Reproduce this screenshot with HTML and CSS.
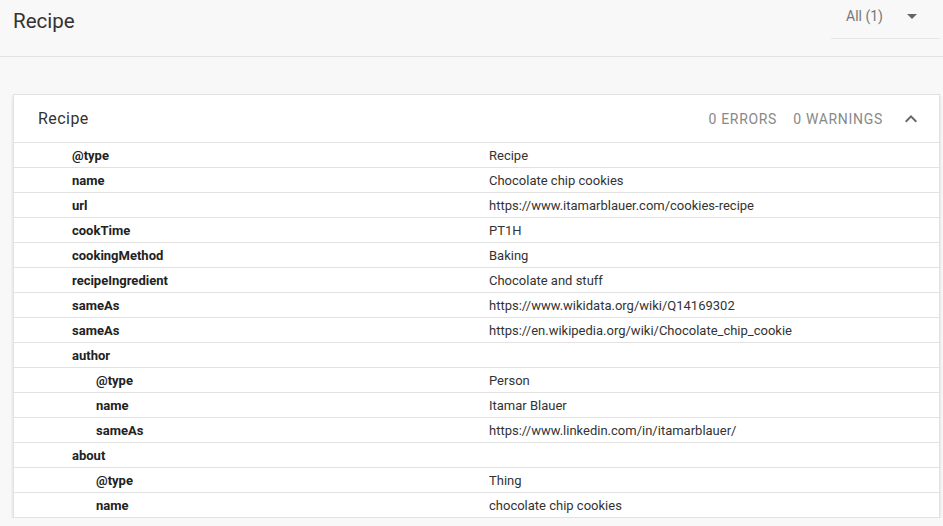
FILE: index.html
```html
<!DOCTYPE html>
<html lang="en">
<head>
    <meta charset="UTF-8">
    <title>Recipe</title>
    <link rel="stylesheet" href="styles.css">
</head>
<body>
    <header class="topbar">
        <h1>Recipe</h1>
        <div class="filter">
            <span>All (1)</span>
            <svg width="10" height="5" viewBox="0 0 10 5"><path d="M0 0h10L5 5z" fill="#666"/></svg>
        </div>
    </header>

    <section class="card">
        <div class="card-head">
            <h2>Recipe</h2>
            <div class="counts">
                <span>0 ERRORS</span>
                <span>0 WARNINGS</span>
                <svg width="12" height="8" viewBox="0 0 12 8"><path d="M1.4 7.4L6 2.8l4.6 4.6L12 6 6 0 0 6z" fill="#666"/></svg>
            </div>
        </div>
        <table class="props">
            <tr><th>@type</th><td>Recipe</td></tr>
            <tr><th>name</th><td>Chocolate chip cookies</td></tr>
            <tr><th>url</th><td>https://www.itamarblauer.com/cookies-recipe</td></tr>
            <tr><th>cookTime</th><td>PT1H</td></tr>
            <tr><th>cookingMethod</th><td>Baking</td></tr>
            <tr><th>recipeIngredient</th><td>Chocolate and stuff</td></tr>
            <tr><th>sameAs</th><td>https://www.wikidata.org/wiki/Q14169302</td></tr>
            <tr><th>sameAs</th><td>https://en.wikipedia.org/wiki/Chocolate_chip_cookie</td></tr>
            <tr><th>author</th><td></td></tr>
            <tr class="nested"><th>@type</th><td>Person</td></tr>
            <tr class="nested"><th>name</th><td>Itamar Blauer</td></tr>
            <tr class="nested"><th>sameAs</th><td>https://www.linkedin.com/in/itamarblauer/</td></tr>
            <tr><th>about</th><td></td></tr>
            <tr class="nested"><th>@type</th><td>Thing</td></tr>
            <tr class="nested"><th>name</th><td>chocolate chip cookies</td></tr>
        </table>
    </section>
</body>
</html>
```

FILE: styles.css
```css
/* Base */
body {
    margin: 0;
    background: #f8f8f8;
    font-family: Roboto, 'Liberation Sans', sans-serif;
    color: #222;
    overflow: hidden;
}

/* Top bar */
.topbar {
    height: 57px;
    box-sizing: border-box;
    border-bottom: 1px solid #e2e2e2;
    display: flex;
    align-items: center;
    justify-content: space-between;
    padding: 0 3px 0 13px;
}

.topbar h1 {
    margin: 0 0 14px;
    font-size: 20.5px;
    font-weight: 400;
    color: #333;
}

.filter {
    width: 109px;
    height: 39px;
    box-sizing: border-box;
    border-bottom: 1px solid #e6e6e6;
    display: flex;
    align-items: center;
    justify-content: space-between;
    padding: 0 23px 6px 15px;
    margin-bottom: 17px;
    font-size: 14px;
    color: #777;
}

/* Card */
.card {
    margin: 37px 3px 0 13px;
    background: #fff;
    border: 1px solid #e2e2e2;
    box-shadow: 0 2px 3px rgba(0, 0, 0, 0.14);
}

.card-head {
    height: 47px;
    display: flex;
    align-items: center;
    justify-content: space-between;
    padding: 0 22px 0 24px;
    border-bottom: 1px solid #e2e2e2;
}

.card-head h2 {
    margin: 0;
    font-size: 16px;
    font-weight: 400;
    letter-spacing: 0.45px;
    color: #333;
}

.counts {
    display: flex;
    align-items: center;
    font-size: 14px;
    letter-spacing: 0.7px;
    color: #888;
}

.counts span {
    margin-right: 16px;
}

.counts span:last-of-type {
    margin-right: 8px;
}

.counts svg {
    margin-left: 14px;
}

/* Property table */
.props {
    width: 100%;
    border-collapse: collapse;
    table-layout: fixed;
    font-size: 13px;
}

.props th,
.props td {
    height: 24px;
    padding: 0;
    text-align: left;
    border-top: 1px solid #e2e2e2;
}

.props tr:first-child th,
.props tr:first-child td {
    border-top: none;
}

.props th {
    width: 417px;
    padding-left: 58px;
    font-weight: 700;
    color: #222;
}

.props td {
    color: #333;
}

.props .nested th {
    padding-left: 82px;
}
```
